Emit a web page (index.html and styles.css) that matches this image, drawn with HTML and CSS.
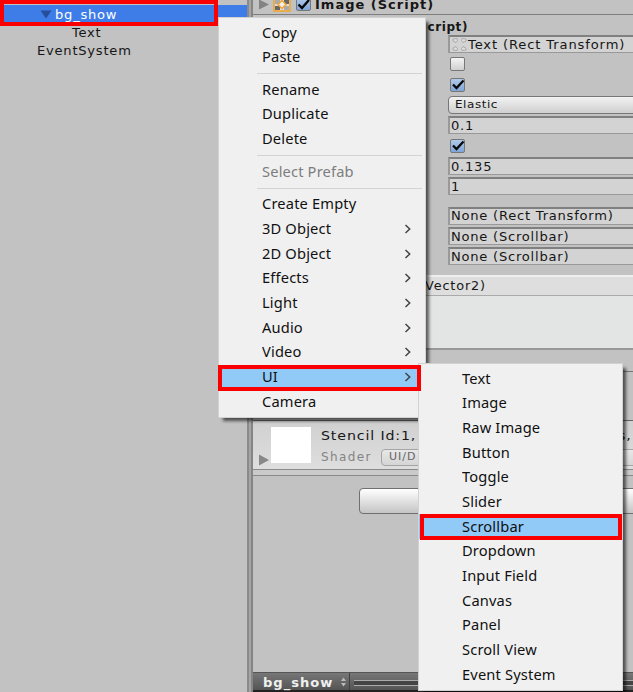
FILE: index.html
```html
<!DOCTYPE html>
<html lang="en">
<head>
<meta charset="utf-8">
<title>Editor</title>
<link rel="stylesheet" href="styles.css">
</head>
<body>
<div class="editor">
  <aside class="hierarchy">
    <div class="node selected"><svg class="fold" width="12" height="9" viewBox="0 0 12 9"><path d="M0.5 0.5H11.5L6 8.5Z" fill="#264e9b"/></svg><span>bg_show</span></div>
    <div class="node child"><span>Text</span></div>
    <div class="node root"><span>EventSystem</span></div>
  </aside>
  <div class="divider"></div>
  <main class="inspector">
    <header class="component">
      <svg width="12" height="12" viewBox="0 0 12 12"><path d="M1 0.5L11 5.5L1 10.5Z" fill="#828282"/></svg>
      <svg class="image-icon" width="18" height="15" viewBox="0 0 18 15"><rect x="1" y="-4" width="16" height="15" fill="#ddd" stroke="#f0a52d" stroke-width="1.6"/><path d="M2 6H7V10H2ZM11 0H16V4H11Z" fill="#666"/><path d="M2 0H7V4H2ZM11 6H16V10H11Z" fill="#aaa"/><path d="M9 0.5L13 4.5L9 8.5L5 4.5Z" fill="#eee" stroke="#f0a52d" stroke-width="1.5"/></svg>
      <span class="check on"><svg width="17" height="15" viewBox="0 0 17 15"><path d="M2.5 6.5L6 10L13 2" fill="none" stroke="#080808" stroke-width="2.4"/></svg></span>
      <b>Image (Script)</b>
    </header>
    <div class="script-title"><b>cript)</b></div>
    <div class="fields">
      <div class="field"><svg class="rect-icon" width="17" height="15" viewBox="0 0 17 15"><path d="M2 2L6 1.5L6.5 3.5L5 5.5L2 4ZM15 2L11 1.5L10.5 3.5L12 5.5L15 4ZM2 13L6 13.5L6.5 11.5L5 9.5L2 11ZM15 13L11 13.5L10.5 11.5L12 9.5L15 11Z" fill="#ddd" stroke="#aaa"/></svg><span>Text (Rect Transform)</span></div>
      <div class="slot"><span class="check"></span></div>
      <div class="slot"><span class="check on"><svg width="17" height="15" viewBox="0 0 17 15"><path d="M3 6.5L6.5 10L13.5 2.5" fill="none" stroke="#080808" stroke-width="2.3"/></svg></span></div>
      <div class="field popup"><span>Elastic</span></div>
      <div class="field"><span>0.1</span></div>
      <div class="slot"><span class="check on"><svg width="17" height="15" viewBox="0 0 17 15"><path d="M3 6.5L6.5 10L13.5 2.5" fill="none" stroke="#080808" stroke-width="2.3"/></svg></span></div>
      <div class="field"><span>0.135</span></div>
      <div class="field"><span>1</span></div>
      <div class="field group"><span>None (Rect Transform)</span></div>
      <div class="field"><span>None (Scrollbar)</span></div>
      <div class="field"><span>None (Scrollbar)</span></div>
    </div>
    <section class="event">
      <div class="event-head"><span>Vector2)</span></div>
      <div class="event-body"></div>
    </section>
    <div class="spacer"></div>
    <div class="canvas-line"></div>
    <section class="material">
      <svg class="mat-arrow" width="12" height="12" viewBox="0 0 12 12"><path d="M1 0.5L11 6L1 11.5Z" fill="#888"/></svg>
      <div class="swatch"></div>
      <div class="mat-info">
        <div class="mat-name"><span>Stencil Id:1,</span><span class="mat-tail">s,</span></div>
        <div class="shader"><span>Shader</span><div class="shader-popup"><span>UI/D</span></div></div>
      </div>
    </section>
    <div class="mat-foot"></div>
    <div class="add-component"></div>
    <footer class="preview"><b>bg_show</b><svg width="7" height="10" viewBox="0 0 7 10"><path d="M3.5 0.5L6 4H1ZM3.5 9.5L1 6H6Z" fill="#bbb"/></svg><i class="sep"></i><i class="grip"></i></footer>
  </main>
</div>

<nav class="menu main-menu">
  <div class="item"><span>Copy</span></div>
  <div class="item"><span>Paste</span></div>
  <hr>
  <div class="item"><span>Rename</span></div>
  <div class="item"><span>Duplicate</span></div>
  <div class="item"><span>Delete</span></div>
  <hr>
  <div class="item disabled"><span>Select Prefab</span></div>
  <hr>
  <div class="item"><span>Create Empty</span></div>
  <div class="item"><span>3D Object</span><svg width="8" height="10" viewBox="0 0 8 10"><path d="M1.5 1L5.7 5L1.5 9"/></svg></div>
  <div class="item"><span>2D Object</span><svg width="8" height="10" viewBox="0 0 8 10"><path d="M1.5 1L5.7 5L1.5 9"/></svg></div>
  <div class="item"><span>Effects</span><svg width="8" height="10" viewBox="0 0 8 10"><path d="M1.5 1L5.7 5L1.5 9"/></svg></div>
  <div class="item"><span>Light</span><svg width="8" height="10" viewBox="0 0 8 10"><path d="M1.5 1L5.7 5L1.5 9"/></svg></div>
  <div class="item"><span>Audio</span><svg width="8" height="10" viewBox="0 0 8 10"><path d="M1.5 1L5.7 5L1.5 9"/></svg></div>
  <div class="item"><span>Video</span><svg width="8" height="10" viewBox="0 0 8 10"><path d="M1.5 1L5.7 5L1.5 9"/></svg></div>
  <div class="item active"><span>UI</span><svg width="8" height="10" viewBox="0 0 8 10"><path d="M1.5 1L5.7 5L1.5 9"/></svg></div>
  <div class="item"><span>Camera</span></div>
</nav>

<nav class="menu sub-menu">
  <div class="item"><span>Text</span></div>
  <div class="item"><span>Image</span></div>
  <div class="item"><span>Raw Image</span></div>
  <div class="item"><span>Button</span></div>
  <div class="item"><span>Toggle</span></div>
  <div class="item"><span>Slider</span></div>
  <div class="item active"><span>Scrollbar</span></div>
  <div class="item"><span>Dropdown</span></div>
  <div class="item"><span>Input Field</span></div>
  <div class="item"><span>Canvas</span></div>
  <div class="item"><span>Panel</span></div>
  <div class="item"><span>Scroll View</span></div>
  <div class="item"><span>Event System</span></div>
</nav>

<div class="mark mark-node"></div>
<div class="mark mark-ui"></div>
<div class="mark mark-scrollbar"></div>
</body>
</html>
```
FILE: styles.css
```css
* { box-sizing: border-box; }
body {
  margin: 0;
  width: 633px;
  height: 692px;
  overflow: hidden;
  position: relative;
  background: #c2c2c2;
  color: #161616;
  font: 12px/18px "DejaVu Sans", sans-serif;
  letter-spacing: 0.7px;
}
svg { display: block; flex: none; }
span, b { white-space: pre; }
.editor { display: flex; height: 692px; }
.node span, .field span, .mat-name span { transform: scaleX(1.09); transform-origin: left; }

.hierarchy { width: 247px; padding-top: 5px; background: #c2c2c2; }
.node { display: flex; align-items: center; height: 18px; letter-spacing: 0.7px; }
.node.selected { padding-left: 40px; background: #3e7de7; color: #fff; height: 19px; }
.node.selected span { margin-left: 3px; padding-top: 1px; }
.node.child { padding-left: 72px; }
.node.root { padding-left: 37px; }

.divider {
  width: 6px;
  background: #a5a5a5;
  border-left: 2px solid #8a8a8a;
  border-right: 2px solid #858585;
}
.inspector { flex: 1; min-width: 0; display: flex; flex-direction: column; overflow: hidden; }
.component {
  flex: none;
  display: flex;
  align-items: center;
  height: 15px;
  padding-left: 5px;
  border-bottom: 1px solid #7e7e7e;
}
.component b { font-size: 13px; line-height: 14px; margin: -4px 0 0 4px; letter-spacing: 1px; }
.component svg { margin-top: -4px; }
.component .image-icon { margin: 0 5px 0 3px; }
.component .check { margin-top: -6px; }
.script-title { flex: none; height: 20px; padding-top: 3px; width: 215px; text-align: right; letter-spacing: 0.6px; }

.fields { flex: none; padding-left: 195px; display: flex; flex-direction: column; gap: 2.35px; }
.field {
  height: 18px;
  display: flex;
  align-items: center;
  padding: 0 0 0 1px;
  background: #d3d3d3;
  border: 1px solid #999;
  border-top: 2px solid #808080;
  border-left-width: 2px;
  border-right: 0;
  width: 300px;
}
.field:first-child { padding-left: 0; }
.field:first-child span { letter-spacing: 0.8px; }
.field span { line-height: 16px; }
.rect-icon { margin: 0 0 0 1px; }
.field.popup {
  padding-left: 6px;
  border: 1px solid #777;
  border-radius: 4px;
  font-size: 11px;
  letter-spacing: 0.5px;
  background: linear-gradient(#f2f2f2, #cfcfcf);
}
.field.group { margin-top: 9px; }
.slot { height: 18px; padding: 2px 0 0 2px; }
.check {
  display: block;
  flex: none;
  width: 15px;
  height: 14px;
  border: 1px solid #777;
  border-radius: 2px;
  background: linear-gradient(#f4f4f4, #d0d0d0);
}
.check.on { background: linear-gradient(#b1c9e8, #7fa5d8); }
.check svg { margin: -1px 0 0 -1px; }
.component .check svg { margin-top: 0; }

.event { flex: none; margin-top: 10px; border-bottom: 2px solid #999; height: 75px; }
.event-head {
  height: 21px;
  background: #dedede;
  border-top: 2px solid #eee;
  border-bottom: 1px solid #aaa;
}
.event-head span {
  display: block;
  width: 233px;
  text-align: right;
  line-height: 18px;
  letter-spacing: 0.8px;
  transform: scaleX(1.07);
  transform-origin: right;
}
.event-body { height: 52px; background: #e3e5e4; }
.spacer { flex: none; height: 21px; }
.canvas-line { flex: none; height: 49px; border-top: 1px solid #777; }
.material {
  flex: none;
  display: flex;
  height: 50px;
  padding: 6px 0 0 5px;
  border-top: 1px solid #666;
  border-bottom: 1px solid #8a8a8a;
  background: linear-gradient(#d0d0d0, #dedede);
}
.mat-arrow { margin-top: 27px; }
.swatch { flex: none; width: 40px; height: 36px; background: #fff; margin-left: 1px; }
.mat-info { flex: 1; margin-left: 10px; min-width: 0; }
.mat-name { display: flex; justify-content: space-between; width: 310px; font-size: 13px; line-height: 18px; letter-spacing: 0.8px; }
.shader { display: flex; align-items: center; color: #858585; height: 24px; letter-spacing: 1.4px; }
.shader-popup {
  flex: none;
  width: 270px;
  height: 17px;
  margin: 1px 0 0 9px;
  padding-left: 7px;
  border: 1px solid #a5a5a5;
  border-radius: 4px;
  font-size: 11px;
  line-height: 14px;
  letter-spacing: 1px;
  color: #666;
  background: linear-gradient(#e8e8e8, #d5d5d5);
}
.mat-foot { flex: none; height: 6px; border-bottom: 1px solid #8a8a8a; background: #cacaca; }
.add-component {
  flex: none;
  width: 300px;
  height: 26px;
  margin: 12px 0 0 106px;
  border: 1px solid #707070;
  border-radius: 4px;
  background: linear-gradient(#fff, #c4c4c4);
}
.preview {
  flex: none;
  margin-top: auto;
  height: 20px;
  display: flex;
  align-items: center;
  padding-left: 10px;
  background: linear-gradient(#777, #545454);
  border-top: 1px solid #555;
  border-bottom: 2px solid #222;
  color: #f0f0f0;
}
.preview b { letter-spacing: 0.9px; margin: 2px 6px 0 0; transform: scaleX(1.09); transform-origin: left; }
.preview svg { margin-left: 6px; }
.sep { width: 1px; height: 100%; background: #404040; margin: 0 4px 0 2px; }
.grip { flex: 1; height: 6px; border-top: 1px solid #aaa; border-bottom: 1px solid #aaa; background: #444; margin-top: 3px; }

.menu {
  position: absolute;
  background: #f0f0f0;
  border: 1px solid #d2d2d2;
  box-shadow: 4px 4px 3px -1px rgba(0, 0, 0, 0.6);
  color: #101010;
  font: 13.5px/24px "Noto Sans", sans-serif;
  letter-spacing: 0.15px;
  padding-top: 2.2px;
}
.main-menu { left: 218px; top: 17px; width: 208px; height: 401px; }
.sub-menu { left: 418px; top: 363px; width: 205px; height: 328px; }
.item { display: flex; align-items: center; height: 24.7px; padding: 0 13px 0 43px; }
.item span { transform: scaleX(1.085); transform-origin: left; }
.item svg { margin-left: auto; fill: none; stroke: #444; stroke-width: 1.5; }
.item.active { background: #91c9f7; }
.item.disabled { color: #7d7d7d; }
.menu hr { height: 1px; border: 0; margin: 3.5px 3px 3.4px 38px; background: #d3d3d3; }

.mark { position: absolute; border: 4px solid #fb0000; }
.mark-node { left: 0; top: 0; width: 218px; height: 26px; }
.mark-ui { left: 218px; top: 365px; width: 203px; height: 26px; }
.mark-scrollbar { left: 420px; top: 514px; width: 202px; height: 26px; }
```
